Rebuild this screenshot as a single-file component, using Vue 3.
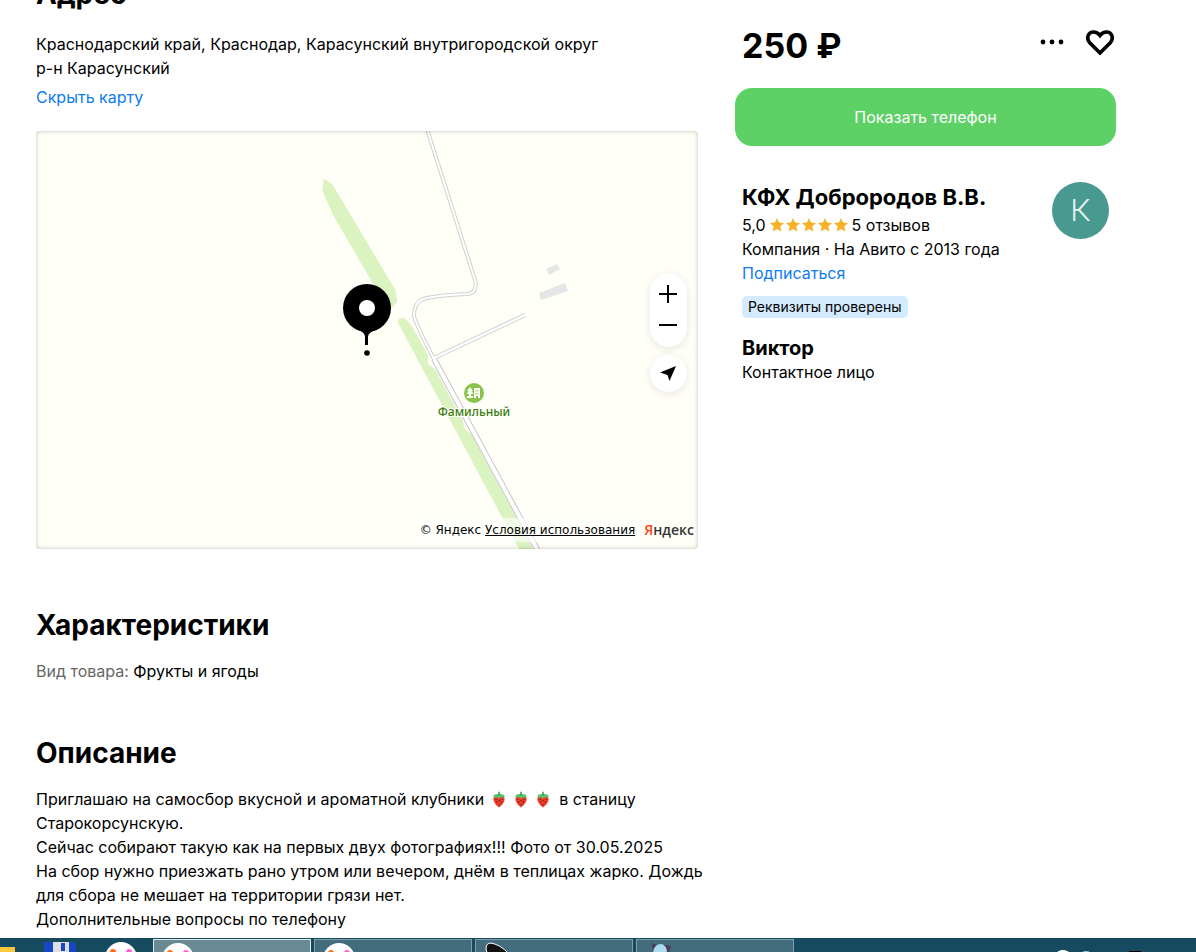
<template>
  <div class="screen">
    <main class="page">
      <div class="content">
        <section class="section address">
          <h2 class="section-title">Адрес</h2>
          <div class="text">Краснодарский край, Краснодар, Карасунский внутригородской округ</div>
          <div class="text">р-н Карасунский</div>
          <a class="link map-toggle" href="#">Скрыть карту</a>

          <div class="map">
            <svg class="map-canvas" viewBox="36 131 662 418" preserveAspectRatio="xMidYMid slice" aria-hidden="true">
              <rect x="36" y="131" width="662" height="418" fill="#fffff8" />
              <!-- зелень -->
              <g fill="#daf3c0">
                <path d="M324 179 L332 184 L334 187 L396 291 L397 302 L391 309 L372 282 L333 215 L322 190 Z" />
                <path d="M398 323 Q397 318 402 318 Q407 318 414 330 L428 355 L428 364 L435 369 L463 421 L464 428 L472 435 L533 549 H519 Z" />
              </g>
              <!-- дороги -->
              <g fill="none" stroke-linejoin="round">
                <path d="M427 129 L475 280 Q478 292 468 294 Q438 295 423 299 Q414 303 414 315 Q414 321 434 359" stroke="#d0d0d0" stroke-width="4" />
                <path d="M434 358 L525 315" stroke="#d8d8d8" stroke-width="4.500" />
                <path d="M434 359 L538 551" stroke="#c6c6c6" stroke-width="6" />
                <path d="M427 129 L475 280 Q478 292 468 294 Q438 295 423 299 Q414 303 414 315 Q414 321 434 359" stroke="#fff" stroke-width="2" />
                <path d="M434 358 L525 315" stroke="#fff" stroke-width="2" />
                <path d="M434 359 L538 551" stroke="#fff" stroke-width="4" />
              </g>
              <g fill="#e5e5e7">
                <path d="M546 269 L557 264 L560 269 L549 275 Z" />
                <path d="M539 293 L565 283 L568 291 L541 300 Z" />
              </g>
              <!-- метка посёлка -->
              <circle cx="474" cy="393" r="10" fill="#8bc34a" />
              <path d="M470 387 l3 4 h-1.500 l2 3 h-2.500 v3 h-2 v-3 h-2.500 l2 -3 h-1.500 Z M474 388 h6 v10 h-2 v-2 h-2 v2 h-2 Z M467 396 h6 v2 h-6 Z" fill="#fff" />
              <path d="M475.500 390 h1 v1.500 h-1 Z M477.500 390 h1 v1.500 h-1 Z M475.500 393 h1 v1.500 h-1 Z M477.500 393 h1 v1.500 h-1 Z" fill="#8bc34a" />
              <text class="map-label" x="474" y="416" text-anchor="middle">Фамильный</text>
              <!-- булавка -->
              <circle cx="367" cy="308" r="24" />
              <path d="M359 330 H375 Q368 333 368 337 V345 H365 V337 Q365 333 359 330 Z" />
              <circle cx="367" cy="308" r="8" fill="#fff" />
              <circle cx="367" cy="353" r="2.800" />
            </svg>

            <div class="map-controls">
              <div class="zoom">
                <button class="map-btn" type="button" aria-label="Приблизить">
                  <svg width="19" height="19" viewBox="0 0 19 19"><path d="M0 9 H18 M9 0 V18" /></svg>
                </button>
                <button class="map-btn" type="button" aria-label="Отдалить">
                  <svg width="19" height="19" viewBox="0 0 19 19"><path d="M0 9 H18" /></svg>
                </button>
              </div>
              <button class="map-btn locate" type="button" aria-label="Моё местоположение">
                <svg width="19" height="19" viewBox="0 0 19 19"><path d="M17 2 L10.500 17 L8.500 11 L1 8.500 Z" /></svg>
              </button>
            </div>

            <div class="copyright">
              <span class="terms">© Яндекс <a href="#">Условия использования</a></span>
              <span class="ya-logo"><b>Я</b>ндекс</span>
            </div>
          </div>
        </section>

        <section class="section">
          <h2 class="section-title">Характеристики</h2>
          <div class="text"><span class="param">Вид товара:</span> Фрукты и ягоды</div>
        </section>

        <section class="section">
          <h2 class="section-title">Описание</h2>
          <div class="text">
            Приглашаю на самосбор вкусной и ароматной клубники
            <svg v-for="n in 3" :key="n" class="berry" viewBox="0 0 16 18" aria-hidden="true">
              <path d="M2 6 Q8 2 14 6 Q16 12 8 18 Q0 12 2 6 Z" fill="#ee3b2b" />
              <path d="M1 5 Q4 2 8 3 Q12 2 15 5 L12 7 L10 6 L8 8 L6 6 L4 7 Z" fill="#52c46c" />
              <path d="M8 4 V0" stroke="#278148" stroke-width="1.500" />
              <path d="M4 9 h1.200 M7.500 10 h1.200 M11 9 h1.200 M5 12 h1.200 M10 12 h1.200 M7.500 15 h1.200" stroke="#4a1712" stroke-width="1.400" />
            </svg>
            в станицу
          </div>
          <div v-for="line in description" :key="line" class="text">{{ line }}</div>
        </section>
      </div>

      <aside class="sidebar">
        <div class="price-row">
          <div class="price">250 ₽</div>
          <div class="actions">
            <button class="icon-btn" type="button" aria-label="Ещё">
              <svg width="24" height="24" viewBox="0 0 24 24">
                <circle cx="3" cy="12" r="2.400" /><circle cx="12" cy="12" r="2.400" /><circle cx="21" cy="12" r="2.400" />
              </svg>
            </button>
            <button class="icon-btn" type="button" aria-label="В избранное">
              <svg width="30" height="28" viewBox="0 0 30 28">
                <path d="M15 25 L4.500 14.500 C1 10 3 4 8.500 4 C11.500 4 13.500 5.500 15 7.500 C16.500 5.500 18.500 4 21.500 4 C27 4 29 10 25.500 14.500 Z" fill="none" stroke="#000" stroke-width="3.600" />
              </svg>
            </button>
          </div>
        </div>

        <button class="phone-btn" type="button">Показать телефон</button>

        <div class="seller">
          <div class="seller-info">
            <h3 class="seller-name">КФХ Доброродов В.В.</h3>
            <div class="text rating">
              <span>5,0</span>
              <span class="stars">
                <svg v-for="n in 5" :key="n" width="14" height="14" viewBox="0 0 14 14" aria-hidden="true">
                  <path d="M7 0 L9 4.600 L14 5.100 L10.300 8.500 L11.300 13.500 L7 11 L2.700 13.500 L3.700 8.500 L0 5.100 L5 4.600 Z" fill="#f8b123" />
                </svg>
              </span>
              <span>5 отзывов</span>
            </div>
            <div class="text">Компания · На Авито с 2013 года</div>
            <a class="link" href="#">Подписаться</a>
            <div class="badge">Реквизиты проверены</div>
            <h4 class="contact-name">Виктор</h4>
            <div class="text">Контактное лицо</div>
          </div>
          <div class="avatar">К</div>
        </div>
      </aside>
    </main>

    <footer class="taskbar">
      <div class="quick">
        <svg width="153" height="14" viewBox="0 0 153 14" aria-hidden="true">
          <rect y="9" width="15" height="5" fill="#ffc83d" />
          <path d="M44 4 H73 L76 7 V14 H44 Z" fill="#1746c8" />
          <rect x="53" y="4" width="16" height="10" fill="#dcdfe4" />
          <rect x="61" y="5" width="4" height="8" fill="#1746c8" />
          <circle cx="121" cy="20" r="16" fill="#fff" />
          <circle cx="113" cy="14" r="3" fill="#ff6a13" />
          <circle cx="129" cy="14" r="3" fill="#ff5fd2" />
        </svg>
      </div>
      <div v-for="task in tasks" :key="task.id" class="task" :class="{ active: task.active }">
        <svg width="60" height="13" viewBox="0 0 60 13" aria-hidden="true">
          <template v-if="task.icon === 'browser'">
            <circle cx="24" cy="19" r="16" fill="#fff" />
            <circle cx="16" cy="13" r="3" fill="#ff6a13" />
            <circle cx="32" cy="13" r="3" fill="#ff5fd2" />
          </template>
          <path v-else-if="task.icon === 'horn'" d="M11 13 Q8 4 14 3 Q24 4 33 14 Z" fill="#111" stroke="#fff" />
          <template v-else>
            <path d="M15 3 L20 5 H29 L34 6 L32 13 H16 Z" fill="#4c3e55" />
            <path d="M16 13 Q17 4 24 4 Q30 5 30 13 Z" fill="#a9d9ef" />
          </template>
        </svg>
      </div>
      <div class="tray">
        <svg width="90" height="14" viewBox="0 0 90 14" aria-hidden="true">
          <ellipse cx="11" cy="15" rx="6" ry="3" fill="#fff" />
          <ellipse cx="34" cy="15" rx="4" ry="2" fill="#9fc4d4" />
          <rect x="77" y="13" width="12" height="1" />
        </svg>
      </div>
    </footer>
  </div>
</template>

<script setup>
const description = [
  'Старокорсунскую.',
  'Сейчас собирают такую как на первых двух фотографиях!!! Фото от 30.05.2025',
  'На сбор нужно приезжать рано утром или вечером, днём в теплицах жарко. Дождь',
  'для сбора не мешает на территории грязи нет.',
  'Дополнительные вопросы по телефону'
]

const tasks = [
  { id: 1, icon: 'browser', active: true },
  { id: 2, icon: 'browser' },
  { id: 3, icon: 'horn' },
  { id: 4, icon: 'avatar' }
]
</script>

<style>
body {
  margin: 0;
  background: #fff;
}
</style>

<style scoped>
.screen {
  display: flex;
  flex-direction: column;
  height: 100vh;
  overflow: hidden;
  font-family: Inter, "Noto Sans", sans-serif;
  font-size: 16px;
  line-height: 24px;
  color: #000;
}

.page {
  flex: 1;
  min-height: 0;
  overflow: hidden;
  display: grid;
  grid-template-columns: minmax(0, 1fr) 381px;
  column-gap: 37px;
  padding: 0 80px 0 36px;
}

.content {
  margin-top: -24px;
}

.section {
  margin-bottom: 52px;
}

.section.address {
  margin-bottom: 58px;
}

.section-title {
  margin: 0 0 16px;
  font-size: 28px;
  line-height: 36px;
  font-weight: 700;
}

.section.address .section-title {
  margin-bottom: 20px;
}

.text {
  white-space: nowrap;
}

.link {
  color: #0d7bf2;
  text-decoration: none;
}

.map-toggle {
  display: inline-block;
  margin-top: 5px;
}

.param {
  color: #666;
}

.berry {
  width: 14px;
  height: 17px;
  margin: 0 5px 0 3px;
  vertical-align: -3px;
}

/* Карта */
.map {
  position: relative;
  height: 418px;
  margin-top: 22px;
  border-radius: 3px;
  overflow: hidden;
}

.map::after {
  content: "";
  position: absolute;
  inset: 0;
  border-radius: 3px;
  box-shadow: inset 0 0 4px rgba(0, 0, 0, 0.25);
  pointer-events: none;
}

.map-canvas {
  display: block;
  width: 100%;
  height: 100%;
}

.map-label {
  font-family: "Noto Sans", sans-serif;
  font-size: 12px;
  font-weight: 500;
  fill: #3b7d0a;
  stroke: #fff;
  stroke-width: 2px;
  paint-order: stroke;
}

.map-controls {
  position: absolute;
  right: 11px;
  top: 142px;
  display: flex;
  flex-direction: column;
  gap: 8px;
}

.zoom,
.locate {
  width: 37px;
  border-radius: 20px;
  background: #fff;
  box-shadow: 0 2px 8px rgba(0, 0, 0, 0.1);
}

.zoom {
  padding: 6px 0;
}

.map-btn {
  display: flex;
  align-items: center;
  justify-content: center;
  width: 37px;
  height: 31px;
  padding: 0;
  border: none;
  background: none;
  cursor: pointer;
}

.map-btn svg {
  stroke: #000;
  stroke-width: 2px;
}

.map-btn.locate {
  height: 37px;
  background: #fff;
}

.locate svg {
  stroke: none;
}

.copyright {
  position: absolute;
  right: 4px;
  bottom: 7px;
  display: flex;
  align-items: center;
  gap: 5px;
  line-height: 24px;
}

.terms {
  padding: 0 4px;
  background: rgba(255, 255, 255, 0.6);
  font-family: "DejaVu Sans", sans-serif;
  font-size: 12px;
}

.terms a {
  color: #000;
}

.ya-logo {
  font-family: "Open Sans", sans-serif;
  font-size: 14px;
  font-weight: 600;
  color: #333;
}

.ya-logo b {
  font-weight: 600;
  color: #fc3f1d;
}

/* Правая колонка */
.price-row {
  display: flex;
  align-items: center;
  justify-content: space-between;
  height: 40px;
  margin-top: 26px;
  padding: 0 1px 0 7px;
}

.price {
  font-size: 34px;
  line-height: 40px;
  font-weight: 700;
}

.actions {
  display: flex;
  align-items: center;
  gap: 21px;
  padding-bottom: 8px;
}

.icon-btn {
  display: flex;
  padding: 0;
  border: none;
  background: none;
  cursor: pointer;
}

.phone-btn {
  width: 100%;
  height: 58px;
  margin-top: 22px;
  border: none;
  border-radius: 17px;
  background: #5ed166;
  color: #fff;
  font: inherit;
  cursor: pointer;
}

.seller {
  display: flex;
  justify-content: space-between;
  margin-top: 36px;
  padding: 0 7px;
}

.seller-name {
  margin: 0;
  font-size: 22px;
  line-height: 31px;
  font-weight: 700;
  white-space: nowrap;
}

.rating {
  display: flex;
  align-items: center;
  gap: 4px;
}

.stars {
  display: flex;
  gap: 2px;
}

.badge {
  width: fit-content;
  margin-top: 11px;
  padding: 0 6px;
  border-radius: 5px;
  background: #d3eaff;
  font-size: 14px;
  line-height: 22px;
}

.contact-name {
  margin: 18px 0 0;
  font-size: 20px;
  line-height: 24px;
  font-weight: 700;
}

.avatar {
  flex-shrink: 0;
  width: 57px;
  height: 57px;
  border-radius: 50%;
  background: #48998f;
  color: #e8f4f2;
  font-family: Roboto, sans-serif;
  font-size: 32px;
  font-weight: 300;
  line-height: 57px;
  text-align: center;
}

/* Панель задач */
.taskbar {
  position: relative;
  flex-shrink: 0;
  display: flex;
  gap: 3px;
  height: 14px;
  overflow: hidden;
  background: #154a5f;
}

.quick {
  width: 150px;
  height: 14px;
}

.task {
  box-sizing: border-box;
  width: 158px;
  height: 24px;
  margin-top: 1px;
  border: 1px solid #7f9fac;
  background: #436d7c;
}

.task.active {
  border-color: #e3eaed;
  background: #698994;
}

.task svg,
.quick svg,
.tray svg {
  display: block;
}

.tray {
  margin-left: auto;
  margin-right: 54px;
}
</style>
